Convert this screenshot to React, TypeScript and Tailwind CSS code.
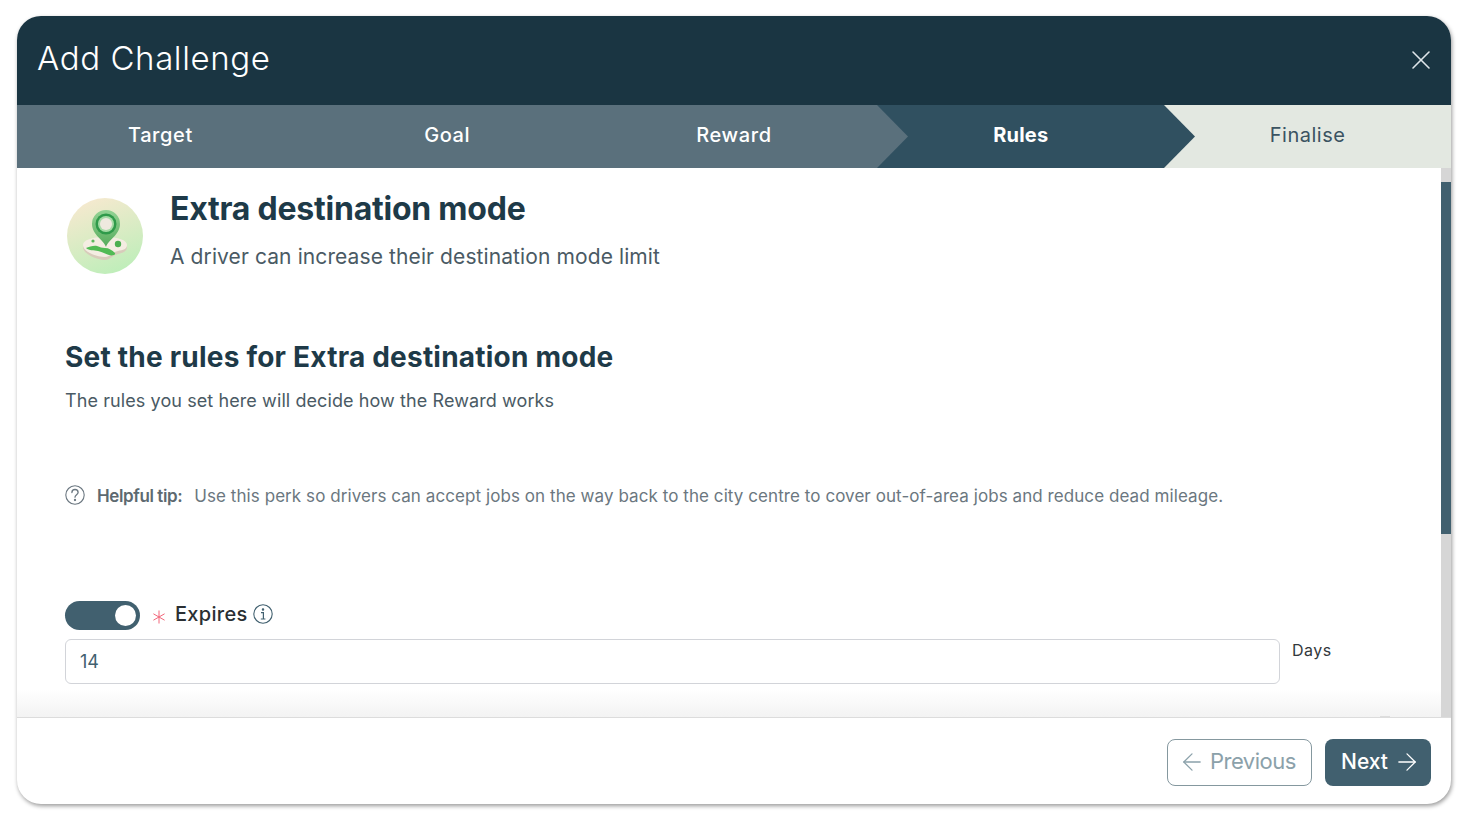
import { ArrowLeft, ArrowRight, X } from "lucide-react";

const PlaceIcon = () => (
  <svg viewBox="0 0 76 76" className="w-[76px] h-[76px] shrink-0">
    <defs>
      <linearGradient id="disc" x1="0.3" y1="0" x2="0.7" y2="1">
        <stop offset="0" stopColor="#f6e9cf" />
        <stop offset="1" stopColor="#bdeeb9" />
      </linearGradient>
      <linearGradient id="pin" x1="0" y1="0" x2="0" y2="1">
        <stop offset="0" stopColor="#93d394" />
        <stop offset="1" stopColor="#56ab5c" />
      </linearGradient>
    </defs>
    <circle cx="38" cy="38" r="38" fill="url(#disc)" />
    <path d="M16 49c0-5 9-9 22-9s22 4 22 9c0 4-4 6-9 7-5 1-8 6-13 6-8 0-22-6-22-13z" fill="#d8ccbb" />
    <path d="M16 47c0-5 9-8 22-8s22 3 22 8c0 4-4 5-9 6-5 1-8 6-13 6-8 0-22-5-22-12z" fill="#f4ede2" />
    <path d="M19 50c3-1 8-3 11-2 3 1 5 2 8 2 4 0 7 2 10 5 1 2-3 3-6 2-4-1-6-3-11-4-4-1-9 0-12-3z" fill="#52bb55" />
    <circle cx="51" cy="46" r="3.2" fill="#4caf50" />
    <circle cx="26" cy="43" r="1.6" fill="#5cb85c" />
    <path d="M39 49C37 42 25 37 25 26a14 14 0 0 1 28 0C53 37 41 42 39 49z" fill="url(#pin)" />
    <circle cx="39" cy="26" r="10.5" fill="#2f9a4a" />
    <circle cx="39" cy="26" r="8" fill="#a5dba6" />
    <circle cx="39" cy="26" r="6" fill="#efe9df" />
  </svg>
);

const HelpIcon = () => (
  <svg viewBox="0 0 20 20" fill="none" className="w-[20px] h-[20px] shrink-0 text-[#6b7780]" stroke="currentColor" strokeWidth="1.1">
    <circle cx="10" cy="10" r="9.2" />
    <path d="M6.9 7.6a3.1 3.1 0 0 1 6.2 0c0 2-3.1 2.4-3.1 4.6" strokeLinecap="round" strokeWidth="1.3" />
    <circle cx="10" cy="15" r="0.6" fill="currentColor" />
  </svg>
);

const InfoIcon = () => (
  <svg viewBox="0 0 20 20" fill="none" className="w-[20px] h-[20px] shrink-0 text-[#41606f]" stroke="currentColor" strokeWidth="1.1">
    <circle cx="10" cy="10" r="9.2" />
    <circle cx="10" cy="5.5" r="0.7" fill="currentColor" />
    <path d="M8 8.6h2.4v6.4M7.8 15h4.6" strokeWidth="1.2" />
  </svg>
);

const steps = [
  { label: "Target", cls: "bg-[#5a707c] text-white font-medium tracking-[0.6px]" },
  { label: "Goal", cls: "bg-[#5a707c] text-white font-medium tracking-[0.6px]" },
  { label: "Reward", cls: "bg-[#5a707c] text-white font-medium tracking-[0.6px]" },
  { label: "Rules", cls: "bg-[#305060] text-white font-bold tracking-[0.2px]" },
  { label: "Finalise", cls: "bg-[#e3e8e1] text-[#3b5361] tracking-[0.5px]" },
];

export default function App() {
  return (
    <div className="h-[825px] w-[1469px] bg-white pt-4 pl-[17px] [font-family:Inter,sans-serif]">
      <div className="w-[1434px] h-[788px] rounded-[24px] bg-white overflow-hidden flex flex-col shadow-[1px_2px_4px_rgba(0,0,0,0.4)]">
        <header className="h-[89px] shrink-0 bg-[#1a3542] flex items-center justify-between pl-[20px] pr-[14px] pb-[4px]">
          <h1 className="text-[33px] font-light text-white tracking-[0.6px]">Add Challenge</h1>
          <X className="w-[32px] h-[32px] text-[#dfe6ea] mt-[3px]" strokeWidth={1.2} />
        </header>

        <nav className="h-[63px] shrink-0 grid grid-cols-5">
          {steps.map((s, i) => (
            <div key={s.label} className={`relative flex items-center justify-center pb-[4px] text-[20px] ${s.cls}`}>
              {s.label}
              {i === 2 && (
                <svg viewBox="0 0 31 63" className="absolute left-full top-0 w-[31px] h-[63px] z-10">
                  <path d="M0 0L31 31.5L0 63Z" fill="#5a707c" />
                </svg>
              )}
              {i === 3 && (
                <svg viewBox="0 0 31 63" className="absolute left-full top-0 w-[31px] h-[63px] z-10">
                  <path d="M0 0L31 31.5L0 63Z" fill="#305060" />
                </svg>
              )}
            </div>
          ))}
        </nav>

        <div className="h-[549px] shrink-0 flex relative">
          <main className="flex-1 pl-12 overflow-hidden">
            <div className="flex gap-[27px] pl-[2px] pt-[30px]">
              <PlaceIcon />
              <div>
                <h2 className="text-[32px] leading-[36px] mt-[-7px] font-bold text-[#1e3a48] tracking-[-0.23px]">Extra destination mode</h2>
                <p className="text-[21px] leading-[28px] mt-[16px] text-[#4a5a64] tracking-[0.1px]">A driver can increase their destination mode limit</p>
              </div>
            </div>

            <h3 className="text-[28px] leading-[36px] mt-[65px] font-bold text-[#1e3a48] tracking-[0.22px]">Set the rules for Extra destination mode</h3>
            <p className="text-[18px] leading-[26px] mt-[13px] text-[#4a5a64] tracking-[0.09px]">The rules you set here will decide how the Reward works</p>

            <div className="flex items-center mt-[70px] h-[26px] text-[#6b7780] text-[17px]">
              <div className="mr-[12px] mt-[-4px]">
                <HelpIcon />
              </div>
              <span className="font-semibold text-[#5d6970] mr-[12px] tracking-[-0.4px]">Helpful tip:</span>
              <span className="tracking-[0.07px]">Use this perk so drivers can accept jobs on the way back to the city centre to cover out-of-area jobs and reduce dead mileage.</span>
            </div>

            <div className="flex items-center mt-[91px] h-[29px]">
              <div className="w-[75px] h-[29px] rounded-full bg-[#41606f] flex items-center justify-end pr-[4px]">
                <div className="w-[21px] h-[21px] rounded-full bg-white" />
              </div>
              <svg viewBox="0 0 14 14" className="w-[14px] h-[14px] ml-[12px] mt-[2px]">
                <path d="M7 0.5V13.5M1.4 3.8L12.6 10.2M1.4 10.2L12.6 3.8" stroke="#f2667a" strokeWidth="1" fill="none" />
              </svg>
              <span className="text-[20px] font-medium text-[#2a2f33] ml-[9px] mt-[-4px] tracking-[0.3px]">Expires</span>
              <div className="ml-[5px] mt-[-4px]">
                <InfoIcon />
              </div>
            </div>

            <div className="flex mt-[9px] h-[45px]">
              <div className="w-[1215px] h-[45px] rounded-[6px] border border-[#d2d4d9] flex items-center px-[14px] text-[18px] text-[#41606f]">14</div>
              <span className="ml-3 text-[16px] leading-[22px] text-[#33383c] tracking-[0.5px]">Days</span>
            </div>
          </main>

          <div className="w-[10px] shrink-0 bg-[#d6d6d6] pt-[14px]">
            <div className="h-[352px] bg-[#41606f]" />
          </div>
          <div className="absolute left-0 right-[10px] bottom-0 h-[28px] bg-gradient-to-b from-white to-[#f3f3f3]" />
          <div className="absolute right-[61px] bottom-0 w-[10px] h-[1px] bg-[#dddddd]" />
        </div>

        <footer className="flex-1 border-t border-[#dcdcdc] flex justify-end items-start gap-[13px] pr-[20px] pt-[21px]">
          <button className="w-[145px] h-[47px] rounded-[8px] border border-[#85989f] flex items-center pl-[10px] gap-[4px] pb-[2px] text-[22px] tracking-[-0.5px] text-[#8ba1aa]">
            <ArrowLeft className="w-[28px] h-[28px] mt-[1px]" strokeWidth={1.1} />
            Previous
          </button>
          <button className="w-[106px] h-[47px] rounded-[8px] bg-[#41606f] flex items-center pl-[16px] gap-[5px] pb-[2px] text-[21px] font-medium text-white">
            Next
            <ArrowRight className="w-[28px] h-[28px] mt-[1px]" strokeWidth={1.1} />
          </button>
        </footer>
      </div>
    </div>
  );
}
